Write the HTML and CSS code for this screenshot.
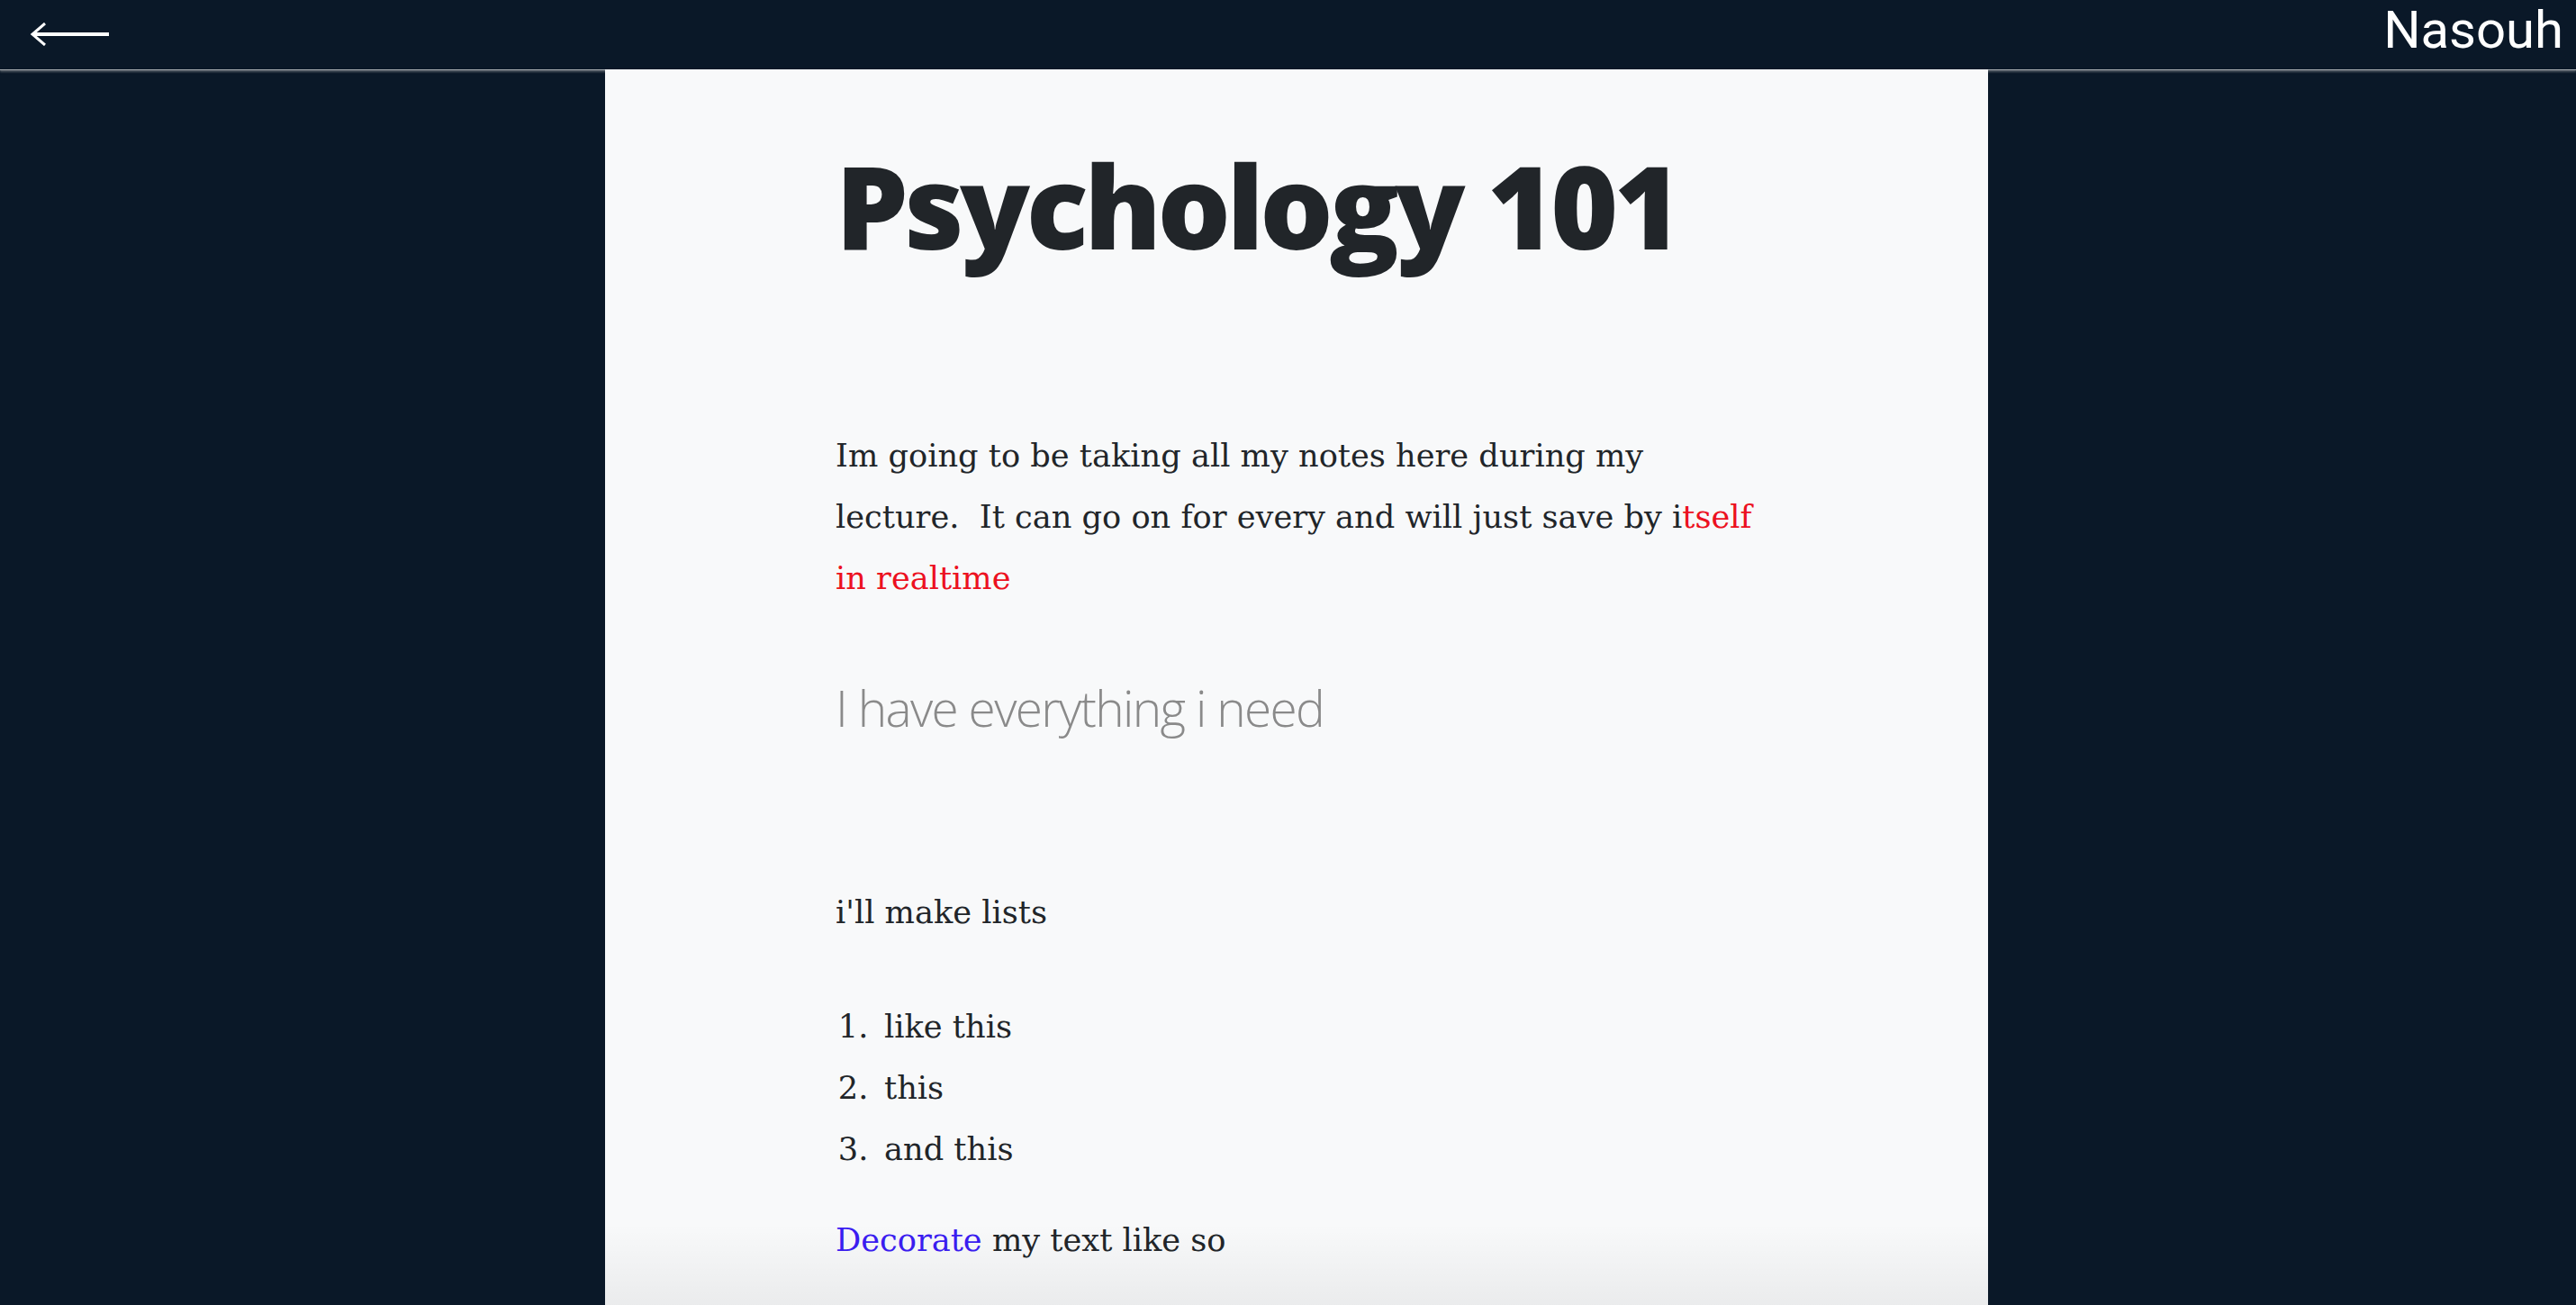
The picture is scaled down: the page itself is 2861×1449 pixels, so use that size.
FILE: index.html
```html
<!DOCTYPE html>
<html lang="en">
<head>
<meta charset="utf-8">
<title>Psychology 101</title>
<link rel="stylesheet" href="styles.css">
</head>
<body>
<header class="topbar">
  <a class="back" href="#" aria-label="Back">
    <svg class="back-icon" width="90" height="26" viewBox="0 0 90 26">
      <line x1="3" y1="13" x2="88" y2="13" stroke="#ffffff" stroke-width="4"/>
      <polyline points="17,1 3,13 17,25" fill="none" stroke="#ffffff" stroke-width="3" stroke-linejoin="miter"/>
    </svg>
  </a>
  <div class="user">Nasouh</div>
</header>
<main class="stage">
  <article class="paper">
    <div class="doc">
      <h1 class="title">Psychology 101</h1>
      <p class="para first">Im going to be taking all my notes here during my<br>lecture.&nbsp; It can go on for every and will just save by i<span class="red">tself<br>in realtime</span></p>
      <h2 class="light">I have everything i need</h2>
      <p class="para lists-intro">i'll make lists</p>
      <ol class="list">
        <li>like this</li>
        <li>this</li>
        <li>and this</li>
      </ol>
      <p class="para deco"><span class="blue">Decorate</span> my text like so</p>
    </div>
    <div class="fade"></div>
  </article>
</main>
</body>
</html>
```
FILE: styles.css
```css
html, body {
  margin: 0;
  padding: 0;
  height: 100%;
  overflow: hidden;
}
body {
  background: #0a1828;
  font-family: "DejaVu Serif", "Liberation Serif", serif;
}
.topbar {
  height: 77px;
  display: flex;
  justify-content: space-between;
  align-items: flex-start;
  box-shadow: 0 1px 0 #a9aeb3, 0 3px 2px rgba(120, 126, 132, 0.6);
  position: relative;
}
.back {
  display: block;
  margin-top: 25px;
  margin-left: 33px;
  line-height: 0;
}
.user {
  font-family: Roboto, "Liberation Sans", sans-serif;
  font-size: 58px;
  line-height: 58px;
  color: #ffffff;
  margin-top: 4px;
  margin-right: 14px;
}
.stage {
  display: flex;
  padding-left: 672px;
}
.paper {
  position: relative;
  z-index: 1;
  width: 1536px;
  height: 1372px;
  background: #f8f9fa;
  overflow: hidden;
}
.doc {
  padding: 74px 0 0 256px;
  color: #212529;
}
.title {
  margin: 0;
  font-family: "Open Sans", sans-serif;
  font-weight: 800;
  font-size: 128px;
  line-height: 1.2;
  letter-spacing: -4.5px;
  color: #212529;
}
.para {
  margin: 0;
  font-size: 35.2px;
  line-height: 68px;
  white-space: nowrap;
}
.first {
  margin-top: 167px;
}
.red {
  color: #ec1020;
}
.blue {
  color: #3b1df2;
}
.light {
  margin: 77px 0 0 0;
  font-family: "Open Sans", sans-serif;
  font-weight: 300;
  font-size: 55px;
  line-height: 1.2;
  letter-spacing: -1.7px;
  color: #8a8a8a;
}
.lists-intro {
  margin-top: 160px;
}
.list {
  margin: 59px 0 0 0;
  padding-left: 54px;
  font-size: 35.2px;
  line-height: 68px;
}
.list li::marker {
  content: counter(list-item) ".\2002";
}
.deco {
  margin-top: 33px;
}
.fade {
  position: absolute;
  left: 0;
  right: 0;
  bottom: 0;
  height: 90px;
  background: linear-gradient(to bottom, rgba(0, 0, 0, 0), rgba(0, 0, 0, 0.055));
}
```
